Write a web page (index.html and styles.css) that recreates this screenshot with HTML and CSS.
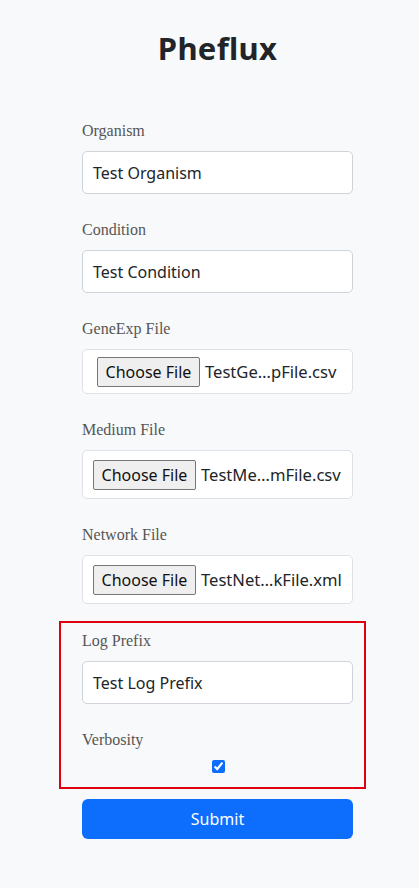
FILE: index.html
```html
<!DOCTYPE html>
<html lang="en">
<head>
<meta charset="utf-8">
<title>Pheflux</title>
<link rel="stylesheet" href="styles.css">
</head>
<body>
<main class="page">
  <h1 class="title">Pheflux</h1>
  <form class="form">
    <div class="group">
      <label class="label">Organism</label>
      <div class="input">Test Organism</div>
    </div>
    <div class="group">
      <label class="label">Condition</label>
      <div class="input">Test Condition</div>
    </div>
    <div class="group">
      <label class="label">GeneExp File</label>
      <div class="file file-a"><span class="choose">Choose File</span><span class="fname">TestGe…pFile.csv</span></div>
    </div>
    <div class="group">
      <label class="label">Medium File</label>
      <div class="file file-b"><span class="choose">Choose File</span><span class="fname">TestMe…mFile.csv</span></div>
    </div>
    <div class="group last">
      <label class="label">Network File</label>
      <div class="file file-b"><span class="choose">Choose File</span><span class="fname">TestNet…kFile.xml</span></div>
    </div>
    <div class="highlight">
      <div class="group">
        <label class="label">Log Prefix</label>
        <div class="input">Test Log Prefix</div>
      </div>
      <div class="group last">
        <label class="label">Verbosity</label>
        <div class="check-row"><input class="check" type="checkbox" checked></div>
      </div>
    </div>
    <button class="submit" type="button">Submit</button>
  </form>
</main>
</body>
</html>
```

FILE: styles.css
```css
html, body {
  margin: 0;
  padding: 0;
  background: #f8f9fa;
}
body {
  font-family: "Noto Sans", "Open Sans", sans-serif;
  color: #212529;
}
.page {
  padding: 29px 0 40px 16px;
  display: flex;
  flex-direction: column;
  align-items: center;
}
.title {
  margin: 0;
  font-size: 31px;
  line-height: 38px;
  font-weight: 700;
  color: #212529;
  letter-spacing: 0.3px;
}
.form {
  width: 271px;
  margin-top: 52px;
  display: flex;
  flex-direction: column;
}
.group {
  display: flex;
  flex-direction: column;
  margin-bottom: 24px;
}
.group.last {
  margin-bottom: 0;
}
.label {
  font-family: "Liberation Serif", "Times New Roman", serif;
  font-size: 16px;
  line-height: 24px;
  color: #555;
  margin-bottom: 8px;
}
.input {
  box-sizing: border-box;
  height: 43px;
  padding: 0 10px;
  display: flex;
  align-items: center;
  background: #fff;
  border: 1px solid #ced4da;
  border-radius: 5px;
  font-size: 16px;
  color: #212529;
}
.file {
  box-sizing: border-box;
  display: flex;
  align-items: center;
  background: #fff;
  border: 1px solid #dee2e6;
  border-radius: 5px;
  font-size: 16px;
  color: #212529;
  white-space: nowrap;
}
.file-a {
  height: 45px;
  padding: 0 14px;
}
.file-b {
  height: 49px;
  padding: 0 10px;
}
.choose {
  box-sizing: border-box;
  height: 30px;
  width: 103px;
  display: flex;
  align-items: center;
  justify-content: center;
  background: #efefef;
  border: 1px solid #767676;
  border-radius: 2px;
  font-size: 16px;
  color: #111;
  margin-right: 5px;
}
.fname {
  font-size: 16.6px;
}
.highlight {
  margin: 17px -13px 0 -23px;
  padding: 6px 11px 5px 21px;
  border: 2px solid #e0000f;
}
.check-row {
  display: flex;
  justify-content: center;
  height: 22px;
  align-items: flex-start;
}
.check {
  margin: 0;
  width: 13px;
  height: 13px;
  accent-color: #0d6efd;
  position: relative;
  left: 1px;
}
.submit {
  margin-top: 10px;
  height: 40px;
  border: none;
  border-radius: 6px;
  background: #0d6efd;
  color: #fff;
  font-family: "Noto Sans", "Open Sans", sans-serif;
  font-size: 16px;
  cursor: pointer;
}
```
